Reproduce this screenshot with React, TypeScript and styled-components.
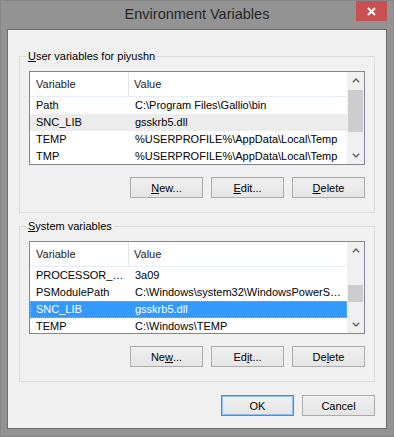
import styled, { createGlobalStyle } from 'styled-components';

type Row = { name: string; value: string; state?: 'idle' | 'inactive' | 'active' };

const userVars: Row[] = [
  { name: 'Path', value: 'C:\\Program Files\\Gallio\\bin' },
  { name: 'SNC_LIB', value: 'gsskrb5.dll', state: 'inactive' },
  { name: 'TEMP', value: '%USERPROFILE%\\AppData\\Local\\Temp' },
  { name: 'TMP', value: '%USERPROFILE%\\AppData\\Local\\Temp' },
];

// the list view shows these already cut down to the column width
const systemVars: Row[] = [
  { name: 'PROCESSOR_R…', value: '3a09' },
  { name: 'PSModulePath', value: 'C:\\Windows\\system32\\WindowsPowerS…' },
  { name: 'SNC_LIB', value: 'gsskrb5.dll', state: 'active' },
  { name: 'TEMP', value: 'C:\\Windows\\TEMP' },
];

const Chevron = ({ up }: { up?: boolean }) => (
  <svg width="8" height="5" viewBox="0 0 8 5">
    <path
      d={up ? 'M0.8 4.2 L4 1 L7.2 4.2' : 'M0.8 0.8 L4 4 L7.2 0.8'}
      fill="none"
      stroke="#606060"
      strokeWidth="1.4"
    />
  </svg>
);

const VarList = ({ rows, height, thumbTop, thumbSize }: { rows: Row[]; height: number; thumbTop: number; thumbSize: number }) => (
  <ListBox $height={height}>
    <Table>
      <HeaderRow>
        <HeaderCell $first>Variable</HeaderCell>
        <HeaderCell>Value</HeaderCell>
      </HeaderRow>
      {rows.map(row => (
        <ItemRow key={row.name + row.value} $state={row.state ?? 'idle'}>
          <NameCell>{row.name}</NameCell>
          <ValueCell>{row.value}</ValueCell>
        </ItemRow>
      ))}
    </Table>
    <ScrollBar>
      <Arrow><Chevron up /></Arrow>
      <Track>
        <Thumb $top={thumbTop} $size={thumbSize} />
      </Track>
      <Arrow><Chevron /></Arrow>
    </ScrollBar>
  </ListBox>
);

const App = (): JSX.Element => {
  return (
    <>
      <GlobalStyle />
      <Window>
        <TitleBar>
          <span />
          <Title>Environment Variables</Title>
          <CloseButton>
            <svg width="9" height="9" viewBox="0 0 9 9">
              <path d="M1 1 L8 8 M8 1 L1 8" stroke="#fff" strokeWidth="2" />
            </svg>
          </CloseButton>
        </TitleBar>
        <Client>
          <GroupBox>
            <Legend><U>U</U>ser variables for piyushn</Legend>
            <VarList rows={userVars} height={94} thumbTop={1} thumbSize={42} />
            <ButtonRow>
              <Button><U>N</U>ew...</Button>
              <Button><U>E</U>dit...</Button>
              <Button><U>D</U>elete</Button>
            </ButtonRow>
          </GroupBox>
          <GroupBox $second>
            <Legend><U>S</U>ystem variables</Legend>
            <VarList rows={systemVars} height={93} thumbTop={26} thumbSize={17} />
            <ButtonRow>
              <Button>Ne<U>w</U>...</Button>
              <Button>Ed<U>i</U>t...</Button>
              <Button>De<U>l</U>ete</Button>
            </ButtonRow>
          </GroupBox>
          <DialogButtons>
            <Button $default>OK</Button>
            <Button>Cancel</Button>
          </DialogButtons>
        </Client>
      </Window>
    </>
  );
};

export default App;

const GlobalStyle = createGlobalStyle`
  html, body {
    margin: 0;
    padding: 0;
    background: #939393;
  }
  body {
    font-family: "Liberation Sans", Arial, sans-serif;
    font-size: 11px;
    color: #000;
  }
`;

const Window = styled.div`
  box-sizing: border-box;
  width: 394px;
  height: 437px;
  display: flex;
  flex-direction: column;
  background: #939393;
  border: 1px solid #868686;
  padding: 0 6px 7px 6px;
`;

const TitleBar = styled.div`
  height: 29px;
  display: grid;
  grid-template-columns: 1fr auto 1fr;
  align-items: center;
`;

const Title = styled.div`
  font-size: 14.5px;
  color: #262626;
  margin-bottom: 2px;
`;

const CloseButton = styled.div`
  justify-self: end;
  align-self: start;
  width: 31px;
  height: 20px;
  background: #c75050;
  display: flex;
  align-items: center;
  justify-content: center;
`;

const Client = styled.div`
  flex: 1;
  display: flex;
  flex-direction: column;
  background: #f0f0f0;
  border: 1px solid #6e6e6e;
  padding: 19px 11px 12px;
`;

const GroupBox = styled.fieldset<{ $second?: boolean }>`
  margin: ${p => (p.$second ? '6px' : '0')} 0 0;
  padding: 8px 9px 14px;
  border: 1px solid #dcdcdc;
  min-width: 0;
`;

const Legend = styled.legend`
  padding: 0 2px;
  margin-left: -3px;
  line-height: 14px;
  font-size: 11px;
  color: #000;
`;

const U = styled.span`
  text-decoration: underline;
`;

const ListBox = styled.div<{ $height: number }>`
  height: ${p => p.$height}px;
  box-sizing: border-box;
  border: 1px solid #828790;
  background: #fff;
  display: flex;
  overflow: hidden;
`;

const Table = styled.div`
  flex: 1;
  min-width: 0;
  display: flex;
  flex-direction: column;
`;

const HeaderRow = styled.div`
  display: grid;
  grid-template-columns: 99px 1fr;
  height: 25px;
  box-sizing: border-box;
  border-bottom: 1px solid #e6edf5;
  flex-shrink: 0;
`;

const HeaderCell = styled.div<{ $first?: boolean }>`
  display: flex;
  align-items: center;
  padding-left: ${p => (p.$first ? '6px' : '5px')};
  color: #1a1a1a;
  border-right: ${p => (p.$first ? '1px solid #e5e5e5' : 'none')};
`;

const ItemRow = styled.div<{ $state: 'idle' | 'inactive' | 'active' }>`
  display: grid;
  grid-template-columns: 100px 1fr;
  height: 17px;
  flex-shrink: 0;
  line-height: 17px;
  box-sizing: border-box;
  background: ${p => (p.$state === 'active' ? '#3399ff' : p.$state === 'inactive' ? '#ececec' : '#fff')};
  color: ${p => (p.$state === 'active' ? '#fff' : '#000')};
  outline: ${p => (p.$state === 'active' ? '1px dotted #e0a060' : 'none')};
  outline-offset: -1px;
`;

const NameCell = styled.div`
  padding-left: 6px;
  overflow: hidden;
  white-space: nowrap;
  text-overflow: ellipsis;
`;

const ValueCell = styled.div`
  padding-left: 5px;
  overflow: hidden;
  white-space: nowrap;
  text-overflow: ellipsis;
`;

const ScrollBar = styled.div`
  width: 17px;
  flex-shrink: 0;
  display: flex;
  flex-direction: column;
  background: #f0f0f0;
`;

const Arrow = styled.div`
  height: 17px;
  flex-shrink: 0;
  display: flex;
  align-items: center;
  justify-content: center;
`;

const Track = styled.div`
  flex: 1;
  display: flex;
  flex-direction: column;
  align-items: center;
`;

const Thumb = styled.div<{ $top: number; $size: number }>`
  width: 15px;
  margin-top: ${p => p.$top}px;
  height: ${p => p.$size}px;
  background: #cdcdcd;
`;

const ButtonRow = styled.div`
  display: flex;
  justify-content: flex-end;
  gap: 8px;
  margin-top: 12px;
`;

const DialogButtons = styled.div`
  display: flex;
  justify-content: flex-end;
  gap: 8px;
  margin-top: 13px;
`;

const Button = styled.div<{ $default?: boolean }>`
  width: 73px;
  height: 21px;
  box-sizing: border-box;
  display: flex;
  align-items: center;
  justify-content: center;
  border: 1px solid ${p => (p.$default ? '#3c8fe6' : '#acacac')};
  box-shadow: ${p => (p.$default ? 'inset 0 0 0 1px #8cc2f5' : 'none')};
  background: linear-gradient(#f0f0f0, #e5e5e5);
  color: #000;
  font-size: 11px;
`;
